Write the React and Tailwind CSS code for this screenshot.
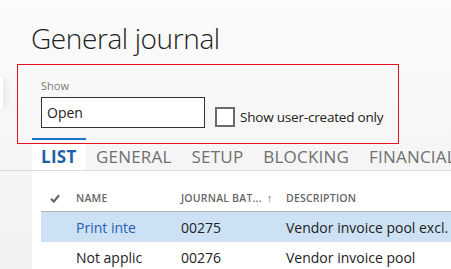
import React from "react";

const tabs = ["GENERAL", "SETUP", "BLOCKING", "FINANCIAL"];

const rows = [
    { name: "Print inte", batch: "00275", desc: "Vendor invoice pool excl. posting", selected: true },
    { name: "Not applic", batch: "00276", desc: "Vendor invoice pool", selected: false },
];

function CheckMark() {
    return (
        <svg width="10" height="9" viewBox="0 0 10 9" className="block">
            <path d="M1 4.8 L3.8 7.6 L9 1.2" fill="none" stroke="#666" strokeWidth="2.2" />
        </svg>
    );
}

export default function App() {
    return (
        <div
            className="relative w-[451px] h-[269px] overflow-hidden bg-gradient-to-b from-[#fbfbfb] to-[#f1f1f1] text-[#222]"
            style={{ fontFamily: '"Open Sans", "Noto Sans", sans-serif' }}
        >
            {/* flyout edge on the left */}
            <div className="absolute left-0 top-[78px] w-[3px] h-[30px] bg-white shadow-[2px_0_6px_rgba(0,0,0,0.12)]" />

            <h1 className="pl-[31px] pt-[20px] h-[61px] text-[28px] font-light leading-[36px] tracking-[-0.4px] text-[#222]">
                General journal
            </h1>

            {/* filter */}
            <div className="pl-[41px] pt-[18px]">
                <div className="text-[11px] leading-[14px] text-[#7a7a7a]">Show</div>
                <div className="flex items-end mt-[4px]">
                    <div className="w-[164px] h-[31px] border border-[#333] bg-white flex items-center pl-[5px] text-[14px]">
                        Open
                    </div>
                    <div className="ml-[10px] mb-[1px] w-[20px] h-[20px] border-2 border-[#6a6a6a] bg-white" />
                    <div className="ml-[5px] mb-[1px] text-[13.5px] leading-[20px] tracking-[-0.2px]">
                        Show user-created only
                    </div>
                </div>
            </div>

            {/* tabs */}
            <div className="flex pl-[32px] mt-[10px] h-[33px] border-b border-[#dcdcdc]">
                <div className="flex flex-col w-[54px] shrink-0">
                    <div className="h-[2px] bg-[#1a73c6]" />
                    <div className="mt-[3px] flex-1 bg-white flex items-center px-[9px] text-[17px] font-bold text-[#1f5fa8] tracking-[0.3px]">
                        LIST
                    </div>
                </div>
                {tabs.map((t) => (
                    <div
                        key={t}
                        className="shrink-0 pt-[5px] px-[10px] flex items-center text-[17px] text-[#707070] tracking-[0.2px] whitespace-nowrap"
                    >
                        {t}
                    </div>
                ))}
            </div>

            {/* grid */}
            <div className="ml-[32px] bg-white h-[100px] pt-[15px] pl-[9px]">
                <div className="flex items-center h-[26px] border-b border-[#b4b4b4] text-[10.5px] font-semibold text-[#666] tracking-[0.2px] whitespace-nowrap">
                    <div className="w-[35px] shrink-0 pl-[9px]">
                        <CheckMark />
                    </div>
                    <div className="w-[105px] shrink-0">NAME</div>
                    <div className="w-[105px] shrink-0 flex items-center gap-[5px]">
                        JOURNAL BAT...
                        <span className="text-[11px]">↑</span>
                    </div>
                    <div>DESCRIPTION</div>
                </div>
                {rows.map((r) => (
                    <div
                        key={r.batch}
                        className={`flex items-center h-[30px] text-[14px] whitespace-nowrap ${r.selected ? "bg-[#cce1f3]" : ""}`}
                    >
                        <div className="w-[35px] shrink-0" />
                        <div className={`w-[105px] shrink-0 ${r.selected ? "text-[#2360b8]" : ""}`}>{r.name}</div>
                        <div className="w-[105px] shrink-0">{r.batch}</div>
                        <div>{r.desc}</div>
                    </div>
                ))}
            </div>

            {/* highlight box */}
            <div className="absolute left-[17px] top-[64px] w-[382px] h-[80px] border border-[#e5121e]" />
        </div>
    );
}
